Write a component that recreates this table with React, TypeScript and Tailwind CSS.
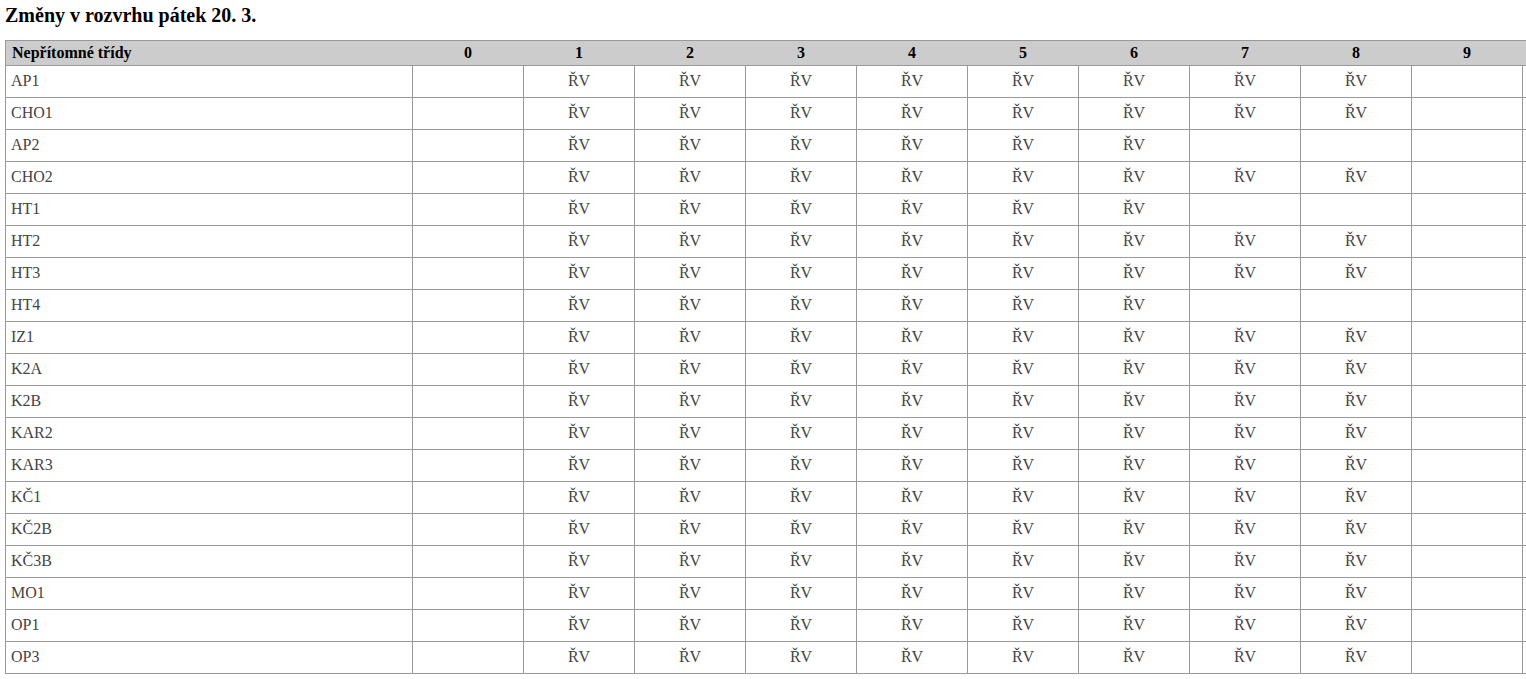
import React from 'react';

const rows: [string, number][] = [
    ['AP1', 8],
    ['CHO1', 8],
    ['AP2', 6],
    ['CHO2', 8],
    ['HT1', 6],
    ['HT2', 8],
    ['HT3', 8],
    ['HT4', 6],
    ['IZ1', 8],
    ['K2A', 8],
    ['K2B', 8],
    ['KAR2', 8],
    ['KAR3', 8],
    ['KČ1', 8],
    ['KČ2B', 8],
    ['KČ3B', 8],
    ['MO1', 8],
    ['OP1', 8],
    ['OP3', 8],
];

const hours = [0, 1, 2, 3, 4, 5, 6, 7, 8, 9];

export default function App() {
    return (
        <div className="w-[1526px] overflow-hidden bg-white font-['Liberation_Serif',serif] text-black">
            {/* Title */}
            <h3 className="pl-[5px] pt-[3px] h-[40px] text-[20px] font-bold leading-[24px]">
                Změny v rozvrhu pátek 20. 3.
            </h3>

            {/* Table, wider than the window like the original page */}
            <div className="pl-[5px]">
                <table className="w-[1628px] table-fixed border-collapse">
                    <colgroup>
                        <col className="w-[407px]" />
                        {hours.map(h => (
                            <col key={h} className="w-[111px]" />
                        ))}
                        <col className="w-[111px]" />
                    </colgroup>
                    <thead>
                        <tr className="h-[25px] bg-[#cccccc]">
                            <th className="border-y border-l border-[#999999] pl-[6px] pb-[1px] text-left text-[16px] font-bold leading-[18px]">
                                Nepřítomné třídy
                            </th>
                            {hours.map(h => (
                                <th key={h} className="border-y border-[#999999] pb-[1px] text-center text-[16px] font-bold leading-[18px]">
                                    {h}
                                </th>
                            ))}
                            <th className="border-y border-[#999999]" />
                        </tr>
                    </thead>
                    <tbody>
                        {rows.map(([name, last]) => (
                            <tr key={name} className="h-[32px]">
                                <td className="border border-[#999999] pl-[5px] pb-[1px] text-[16px] leading-[18px] text-[#444444]">
                                    {name}
                                </td>
                                {hours.map(h => (
                                    <td key={h} className="border border-[#999999] pb-[1px] text-center text-[16px] leading-[18px] text-[#444444]">
                                        {h >= 1 && h <= last ? 'ŘV' : ''}
                                    </td>
                                ))}
                                <td className="border border-[#999999]" />
                            </tr>
                        ))}
                    </tbody>
                </table>
            </div>
        </div>
    );
}
